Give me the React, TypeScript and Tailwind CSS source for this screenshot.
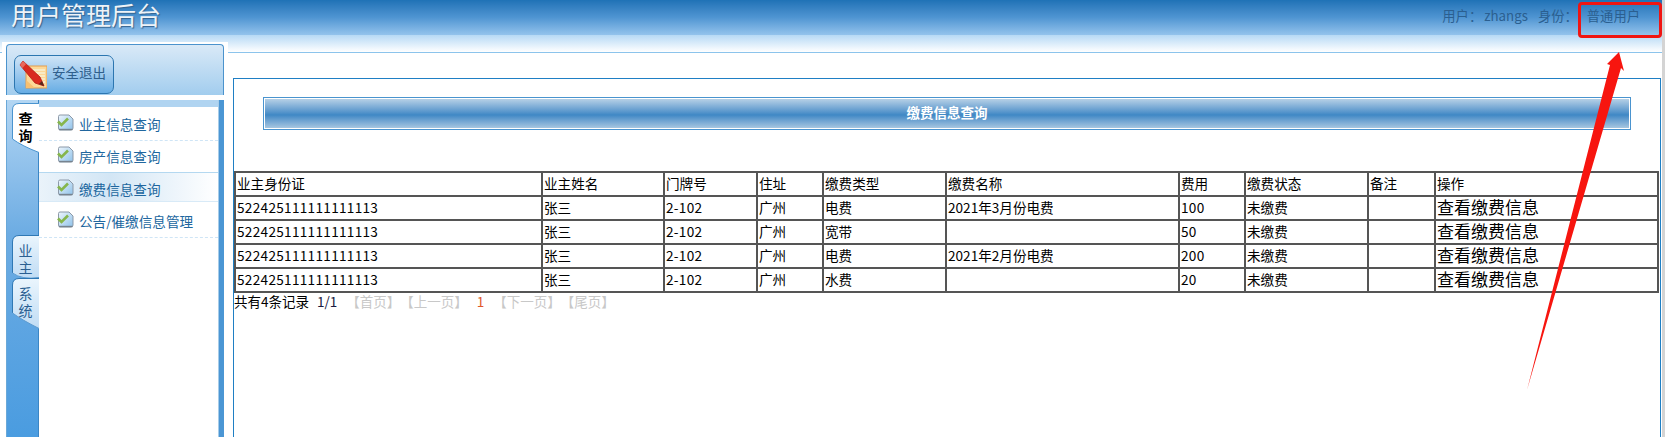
const rows = [
  { fee: "电费", name: "2021年3月份电费", money: "100" },
  { fee: "宽带", name: "", money: "50" },
  { fee: "电费", name: "2021年2月份电费", money: "200" },
  { fee: "水费", name: "", money: "20" },
];

const headers = ["业主身份证", "业主姓名", "门牌号", "住址", "缴费类型", "缴费名称", "费用", "缴费状态", "备注", "操作"];
const widths = [307, 122, 93, 66, 123, 233, 66, 123, 67, 223];

function CheckIcon() {
  return (
    <svg width="17" height="17" viewBox="0 0 17 17" className="shrink-0">
      <defs>
        <linearGradient id="paper" x1="0" y1="0" x2="1" y2="1">
          <stop offset="0" stopColor="#eef6fc" />
          <stop offset="1" stopColor="#8fc2ea" />
        </linearGradient>
      </defs>
      <path d="M1.5 2.5 Q1.5 1 3 1 L12 1 L16 5 L16 14 Q16 16 14 16 L3 16 Q1.5 16 1.5 14 Z" fill="url(#paper)" stroke="#8c99a8" />
      <path d="M2 15.5 L15.5 15.5" stroke="#77838f" strokeWidth="1.4" />
      <path d="M1 7.5 L4.5 11 L11 4.5" fill="none" stroke="#86b64c" strokeWidth="2.6" />
    </svg>
  );
}

function PencilIcon() {
  return (
    <svg width="28" height="29" viewBox="0 0 28 29" className="shrink-0">
      <rect x="7" y="6" width="21" height="22" fill="#fcd898" stroke="#e49c4c" />
      <path d="M12 10H26M12 13H26M14 16H26M17 19H26M20 22H26" stroke="#f8f0d4" strokeWidth="1.3" />
      <path d="M7 20 L7 28 L16 28 Z" fill="#f8c070" />
      <path d="M4 1 L1 5 L16 23 L25 26 L21 17 Z" fill="#d92a20" stroke="#b51a14" strokeWidth="0.8" />
      <path d="M4 1 L1 5 L3.5 8 L7 4 Z" fill="#e9685c" />
      <path d="M20 24 L25 26 L23 21 Z" fill="#5a2a1a" />
    </svg>
  );
}

function TabShape({ h, slant, active }: { h: number; slant: number; active?: boolean }) {
  const id = active ? "tabOn" : slant ? "tabSlant" : "tabOff";
  return (
    <svg width="28" height={h} viewBox={`0 0 28 ${h}`} className="absolute left-0 top-0">
      <defs>
        <linearGradient id={id} x1="0" y1="0" x2="0" y2="1">
          <stop offset="0" stopColor={active ? "#ffffff" : "#eaf5fd"} />
          <stop offset="1" stopColor={active ? "#ffffff" : "#c0dcf4"} />
        </linearGradient>
      </defs>
      <path
        d={`M0.5 ${h - slant - 5} L0.5 7 Q0.5 0.5 7 0.5 L27 0.5 L27 ${h - 0.5} Q10 ${h - slant + 2} 0.5 ${h - slant - 5} Z`}
        fill={`url(#${id})`}
        stroke="none"
      />
      <path
        d={`M0.5 ${h - slant - 5} L0.5 7 Q0.5 0.5 7 0.5 L27 0.5`}
        fill="none"
        stroke={active ? "#4a94cf" : "#2f78b4"}
      />
      <path d={`M0.5 ${h - slant - 5} Q10 ${h - slant + 2} 27 ${h - 0.5}`} fill="none" stroke={active ? "#4a94cf" : "#5a9ad0"} />
    </svg>
  );
}

function SideTab({ h, slant, active, text, className }: { h: number; slant: number; active?: boolean; text: string[]; className: string }) {
  return (
    <div className={`relative w-[28px] ${className}`} style={{ height: h }}>
      <TabShape h={h} slant={slant} active={active} />
      <div className={`relative flex flex-col items-center pr-[1px] text-[14px] leading-[17px] ${active ? "pt-[7px] font-bold text-black" : "pt-[7px] text-[#2a5f92]"}`}>
        {text.map((c) => (
          <span key={c}>{c}</span>
        ))}
      </div>
    </div>
  );
}

function MenuRow({ label, className }: { label: string; className: string }) {
  return (
    <div className={`flex items-start gap-[5px] pl-[18px] ${className}`}>
      <CheckIcon />
      <span className="mt-[2px] whitespace-nowrap text-[13.6px] leading-[16px] text-[#20669e]">{label}</span>
    </div>
  );
}

export default function App() {
  return (
    <div className="relative flex h-[437px] w-[1665px] overflow-hidden bg-white font-['Noto_Sans_CJK_SC','Microsoft_YaHei',sans-serif] text-black">
      <div className="w-[1662px] shrink-0">
        <header>
          <div className="flex h-[35px] items-start justify-between bg-gradient-to-b from-[#1f72b6] via-[#4f95d2] to-[#93c3ec] pl-[11px] pr-[22px]">
            <h1 className="text-[25px] leading-[28px] text-[#eef3f8] [text-shadow:1px_1px_1px_#34628e]">用户管理后台</h1>
            <div className="flex pt-[7px] text-[13.3px] leading-[18px] text-[#2b5f90]">
              <span>用户：</span>
              <span className="ml-[2px]">zhangs</span>
              <span className="ml-[10px]">身份：</span>
              <span className="ml-[9px]">普通用户</span>
            </div>
          </div>
          <div className="h-[18px] border-b border-[#8cc4ec] bg-gradient-to-b from-[#b6d9f5] to-white" />
        </header>

        <div className="flex">
          <aside className="relative z-10 ml-[2px] -mt-[11px] h-[395px] w-[226px] shrink-0 bg-white px-[4px] pt-[2px]">
            <div className="h-[51px] rounded-t-[4px] border border-b-0 border-[#4b93cd] bg-gradient-to-b from-[#d9e9f7] to-[#a2cdee] pl-[7px] pt-[10px]">
              <button className="flex h-[39px] w-[100px] items-center gap-[5px] rounded-[7px] border border-[#2c76b0] bg-gradient-to-b from-[#cfe4f6] to-[#66ade4] pl-[4px] text-[13.5px] text-[#2f5f8c]">
                <PencilIcon />
                <span className="pb-[4px]">安全退出</span>
              </button>
            </div>
            <div className="mt-[5px] flex h-[337px] bg-[#b0d4f1]">
              <div className="flex w-[33px] shrink-0 flex-col border-x border-l-[#6aa8d8] border-r-[#3b86c5] bg-gradient-to-b from-[#b3d6f3] via-[#6cace3] via-40% to-[#4a9ce0] pl-[5px] pt-[3px]">
                <SideTab h={50} slant={9} active text={["查", "询"]} className="z-10" />
                <SideTab h={43} slant={0} text={["业", "主"]} className="mt-[82px]" />
                <SideTab h={51} slant={11} text={["系", "统"]} className="" />
              </div>
              <div className="flex-1 pt-[7px]">
                <div className="h-full bg-white">
                  <MenuRow label="业主信息查询" className="h-[34px] border-b border-dashed border-[#cfe5f6] pt-[7px]" />
                  <MenuRow label="房产信息查询" className="h-[31px] pt-[5px]" />
                  <MenuRow label="缴费信息查询" className="h-[30px] border-y border-t-[#b4d8f0] border-b-[#d8eaf7] bg-gradient-to-r from-[#eaf3fa] via-[#d3e6f5] via-40% to-white pt-[6px]" />
                  <MenuRow label="公告/催缴信息管理" className="mt-[3px] h-[33px] border-b border-dashed border-[#cfe5f6] pt-[6px]" />
                </div>
              </div>
              <div className="w-[6px] shrink-0 border-l border-[#a6cce9] bg-[#4b96d4]" />
            </div>
          </aside>

          <main className="ml-[5px] mt-[25px] h-[400px] w-[1428px] shrink-0 border border-[#1f7fc4] pt-[18px]">
            <div className="ml-[29px] mr-[29px] h-[33px] border border-[#4a94cf] p-px">
              <div className="flex h-full items-center justify-center bg-gradient-to-b from-[#b6d0e6] via-[#3f88c5] via-55% to-[#a6c6e0] pb-[2px] text-[13.5px] font-bold text-white">
                缴费信息查询
              </div>
            </div>

            <table className="mt-[41px] w-[1424px] table-fixed border-collapse border-2 border-[#555] text-[13.6px] leading-[20px]">
              <colgroup>
                {widths.map((w, i) => (
                  <col key={i} style={{ width: w }} />
                ))}
              </colgroup>
              <thead>
                <tr className="h-[24px]">
                  {headers.map((h) => (
                    <th key={h} className="border-2 border-[#555] pb-[2px] pl-[1px] text-left font-normal">{h}</th>
                  ))}
                </tr>
              </thead>
              <tbody>
                {rows.map((r, i) => (
                  <tr key={i} className="h-[24px]">
                    <td className="border-2 border-[#555] pb-[2px] pl-[1px] tracking-[0.3px]">522425111111111113</td>
                    <td className="border-2 border-[#555] pb-[2px] pl-[1px]">张三</td>
                    <td className="border-2 border-[#555] pb-[2px] pl-[1px] tracking-[0.3px]">2-102</td>
                    <td className="border-2 border-[#555] pb-[2px] pl-[1px]">广州</td>
                    <td className="border-2 border-[#555] pb-[2px] pl-[1px]">{r.fee}</td>
                    <td className="border-2 border-[#555] pb-[2px] pl-[1px]">{r.name}</td>
                    <td className="border-2 border-[#555] pb-[2px] pl-[1px] tracking-[0.3px]">{r.money}</td>
                    <td className="border-2 border-[#555] pb-[2px] pl-[1px]">未缴费</td>
                    <td className="border-2 border-[#555] pb-[2px] pl-[1px]"></td>
                    <td className="border-2 border-[#555] pb-[2px] pl-[1px] text-[17px]">查看缴费信息</td>
                  </tr>
                ))}
              </tbody>
            </table>

            <div className="-mt-[2px] flex whitespace-nowrap text-[13.5px] leading-[20px]">
              <span>共有4条记录</span>
              <span className="ml-[8px] text-[#1a1a40]">1/1</span>
              <span className="ml-[9px] text-[#c8c8c8]">【首页】</span>
              <span className="text-[#c8c8c8]">【上一页】</span>
              <span className="ml-[9px] text-[#e0572a]">1</span>
              <span className="ml-[9px] text-[#c8c8c8]">【下一页】</span>
              <span className="text-[#c8c8c8]">【尾页】</span>
            </div>
          </main>
        </div>
      </div>
      <div className="w-[3px] bg-[#d4d4d4]" />

      {/* 标注：红框和箭头 */}
      <div className="absolute left-[1578px] top-[2px] h-[36px] w-[84px] rounded-[4px] border-[3px] border-[#f01512]" />
      <svg width="1665" height="437" className="pointer-events-none absolute left-0 top-0">
        <polygon points="1619,52 1624,71 1621,68 1527,390 1610,65 1607,64" fill="#f7150f" />
      </svg>
    </div>
  );
}
